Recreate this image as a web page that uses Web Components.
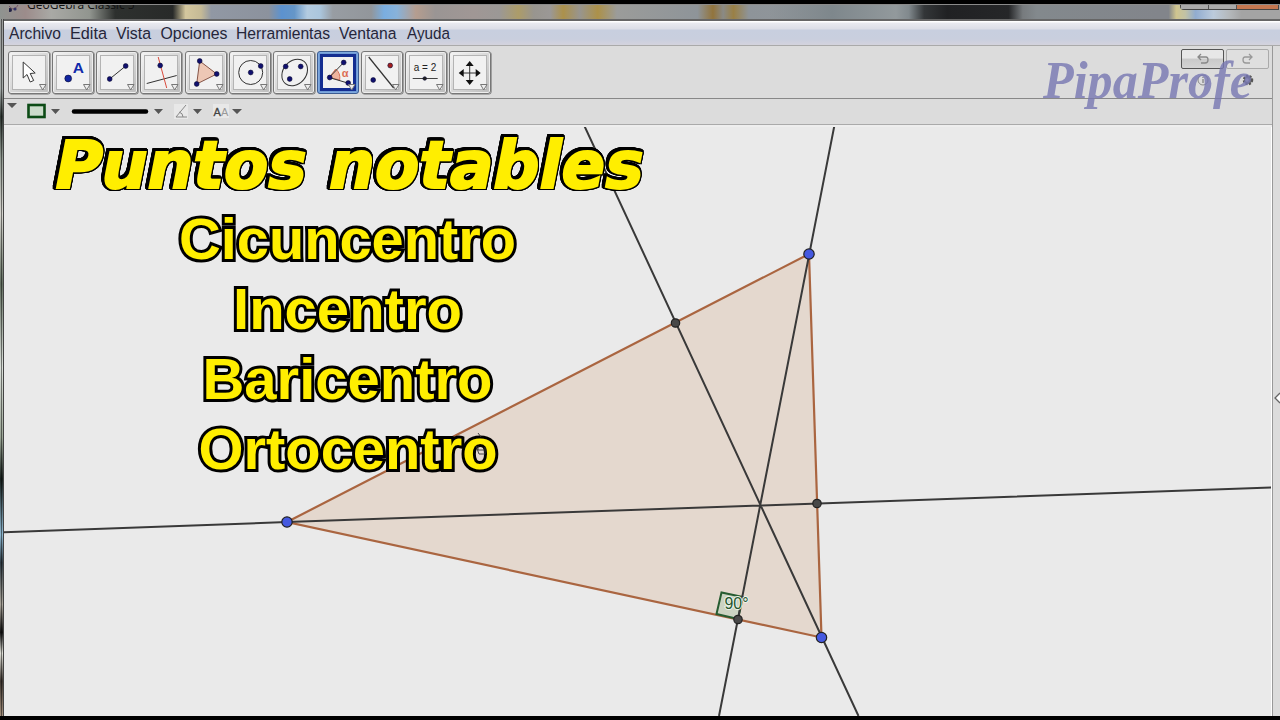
<!DOCTYPE html>
<html lang="es"><head><meta charset="utf-8"><title>GeoGebra Classic 5</title>
<style>html,body{margin:0;height:100%;overflow:hidden;background:#000}</style></head>
<body>
<geo-window></geo-window>
<script>
const define = (name, html, init) => {
  const t = document.createElement('template');
  t.innerHTML = html;
  customElements.define(name, class extends HTMLElement {
    constructor() {
      super();
      this.attachShadow({mode: 'open'}).append(t.content.cloneNode(true));
    }
    connectedCallback() { if (init) init(this, this.shadowRoot); }
  });
};

define('geo-titlebar', `<style>
:host{display:block;height:15px;overflow:hidden;border-top:1px solid #8a8a8a;box-sizing:border-box;
 background:linear-gradient(90deg,#8f9390 0,#9c8c8b 2%,#a9a9a5 4%,#91958f 7%,#2d302e 9%,#282a29 13.5%,#d4c79e 14.5%,#c5ba96 15.7%,#9198a4 16.5%,#8c929d 21%,#5c92cf 22%,#6596c8 23%,#b3cbe0 24%,#abc6dd 25%,#989da3 26%,#92969b 29%,#7aaee0 30%,#88b2da 31%,#b59d8f 32.5%,#9a9594 34%,#a09795 37%,#9b9896 39%,#ac9c69 40.5%,#98958f 41.7%,#9b9896 43%,#ac914b 44%,#98958f 45.3%,#ac9149 46.7%,#9b9c9a 48.2%,#8e9499 54.5%,#92743c 55.7%,#8a8a86 56.5%,#9a8045 57.3%,#8e9499 58.5%,#92979b 65%,#7b8388 80%,#7b8388 100%)}
.row{display:flex;justify-content:space-between;height:14px;
 background:linear-gradient(90deg,transparent 60%,#7e878c 65%,#92999c 70%,#81898d 71%,#333638 72.2%,#202123 74%,#252628 78.8%,#777b7e 79.9%,#83898d 81%,#82858b 90.5%,#82858b 91.3%,#d0c58f 91.9%,#c2c2a5 92.6%,#91acd0 93.4%,#bccbdc 94.8%,#b5b9bc 96%,#a4a4a4 97%)}
.name{display:flex;color:#111;font:12px/12px "Open Sans",sans-serif;padding-left:9px;gap:8px;margin-top:-6px;height:15px}
.name svg{margin-top:5px}
.btns{display:flex;height:4px;margin-right:1px;border:1px solid #444;border-top:0;border-radius:0 0 0 4px;width:97px}
.btns i{width:27px;background:#aaa;border-right:1px solid #555}.btns i:last-child{flex:1;background:#c47750;border:0}
</style><div class="row"><div class="name"><svg width="10" height="12"><path d="M0 2C3 6 6 6 9 1" fill="none" stroke="#765364"/><circle cx="1" cy="6" r="2" fill="#224"/><circle cx="6" cy="5" r="1.6" fill="#336"/></svg><span>GeoGebra Classic 5</span></div><div class="btns"><i></i><i></i><i></i></div></div>`);

define('geo-menubar', `<style>
:host{display:block;height:27px;box-sizing:border-box;border-top:2px solid #666;border-bottom:1px solid #aaa;box-shadow:inset 0 1px #fff;
background:linear-gradient(#fff 0,#fff 1px,#e9eaf0 2px,#dcdee7 8px,#c8cfdf 9px,#c9cfde 18px,#d2d2de 23px,#d4d4dc)}
nav{display:flex;padding:5px 0 0 5px;color:#25263a;font:16.3px/18px "Liberation Sans",sans-serif}
svg{display:block;overflow:visible}
</style><nav></nav>`, (h, r) => {
  const items = [['Archivo',9,52],['Edita',70,37],['Vista',116,35],['Opciones',160.5,67],['Herramientas',236,94],['Ventana',339,57.5],['Ayuda',407,43]];
  r.querySelector('nav').innerHTML = '<svg width="480" height="18">' + items.map(([t,x,w]) =>
    `<text x="${x-9}" y="13" textLength="${w}" lengthAdjust="spacingAndGlyphs" fill="#25263a">${t}</text>`).join('') + '</svg>';
});

define('geo-tool', `<style>
:host{display:block;box-sizing:border-box;width:42px;height:43px;border:1px solid #777;border-radius:3px;padding:3px;
background:linear-gradient(135deg,#f4f4f4,#d2d2d2 60%,#bcbcbc);box-shadow:inset 0 0 0 1px #eee,.6px .6px 0 #777}
.f{box-sizing:border-box;width:34px;height:35px;border:1px solid #b4b4b4;background:#f1f1f1}
:host([active]){background:#6f9ad5;border-color:#3c5c91;box-shadow:inset 0 0 0 1px #7ea9df}
:host([active]) .f{border:3px solid #142d91;width:36px;height:37px;margin:-1px}
svg{display:block;width:34px;height:35px;margin:-1px;overflow:visible}
:host([active]) svg{margin:-2px}
</style><div class="f"></div>`, (h, r) => {
  const d = (x,y,c='#10106f',q=2.4) => `<circle cx="${x}" cy="${y}" r="${q}" fill="${c}" stroke="#080830" stroke-width=".6"/>`;
  const s = 'fill="none" stroke="#333"';
  const icons = {
    move:`<path d="M10.5 7V23L14.3 19.500L17.5 27L21 25.500L17.5 18.500L22.5 18Z" fill="#fff" stroke="#333"/>`,
    point:`${d(11.5,23.5,'#1024a0',3.4)}<text x="16" y="18" font-family="Liberation Sans,sans-serif" font-weight="bold" font-size="15.5" fill="#102aab">A</text>`,
    segment:`<path d="M9 24L25 11" ${s}/>${d(9,24)}${d(25,11)}`,
    perp:`<path d="M2 28.500L32 20.500" ${s}/><path d="M13.500 2L22 33" stroke="#d94a3c" fill="none"/>${d(15.5,10.5)}`,
    poly:`<path d="M10 6L27 19L7 29Z" fill="#edc7b5" stroke="#865548"/>${d(10,6)}${d(27,19)}${d(7,29)}`,
    circle:`<circle cx="17" cy="17.500" r="12" ${s}/>${d(17,17.5)}${d(27,11)}`,
    conic:`<ellipse cx="17" cy="17.500" rx="14.500" ry="11.500" transform="rotate(-50 17 17.500)" ${s}/>${d(8,11.5)}${d(23,11.5)}${d(12,24)}`,
    angle:`<path d="M7.500 22.500L14 14Q19 18 18 25Z" fill="#efb39d" stroke="#d6745e"/><path d="M22 7.500L7.500 22.500L26 28" ${s}/>${d(22,7.5)}${d(8,22.5)}${d(26.5,28)}<text x="20" y="21.500" font-family="Liberation Sans,sans-serif" font-size="11" font-weight="bold" fill="#dc6c51">α</text>`,
    mirror:`<path d="M3 2L28 33" ${s} stroke-width="1.200"/>${d(24.5,10.5,'#a31e1e')}${d(7.5,25)}`,
    slider:`<text x="4" y="15.500" textLength="22.500" lengthAdjust="spacingAndGlyphs" font-family="Liberation Sans,sans-serif" font-size="11" fill="#222">a = 2</text><path d="M3 23.500H28" stroke="#444"/>${d(15,23.5,'#222',1.8)}`,
    pan:`<path d="M16 10V26M8 18H25" ${s}/><path d="M16 6L20 11H12ZM16 30L20 25H12ZM5 18L10 14V22ZM27 18L22 14V22Z" fill="#111"/>`
  };
  r.querySelector('.f').innerHTML = `<svg viewBox="0 0 34 35"><g transform="translate(.7 0)">${icons[h.getAttribute('icon')]}</g><path d="M27.500 29.500H34L30.700 35Z" fill="#eee" stroke="#777"/></svg>`;
});

define('geo-toolbar', `<style>
:host{display:flex;justify-content:space-between;height:53px;box-sizing:border-box;background:#dcdcdc;border-bottom:1px solid #888;padding:5px 3px 0 4px}
.tools{display:flex;gap:2.15px}
.side{display:grid;grid-template-columns:43px 43px;column-gap:2px;grid-template-rows:20px 24px;margin-top:-2px}
.u{box-sizing:border-box;border:1px solid #555;border-radius:2px;background:linear-gradient(#e7e7e7 45%,#c9c9c9 50%,#d4d4d4)}
.u.off{border-color:#aaa;background:#dfdfdf}
svg{display:block;margin:auto}
</style><div class="tools"></div><div class="side">
<div class="u"><svg width="18" height="18"><path d="M7 4L4 7L7 10M4 7H12Q14 7 14 10Q14 13 11 13H7" fill="none" stroke="#888" stroke-width="1.300"/></svg></div>
<div class="u off"><svg width="18" height="18"><path d="M10 4L13 7L10 10M13 7H6Q4 7 4 10Q4 13 7 13H11" fill="none" stroke="#999" stroke-width="1.300"/></svg></div>
<svg width="20" height="20"><circle cx="10" cy="9" r="5" fill="#ddd" stroke="#888"/><path d="M10 12V8M10 7V6" stroke="#666"/></svg>
<svg width="20" height="20"><circle cx="10" cy="9" r="4" fill="#777" stroke="#555" stroke-width="2.500" stroke-dasharray="2 1.300"/><circle cx="9" cy="9" r="1.800" fill="#c4c4d0"/></svg></div>`, (h, r) => {
  r.querySelector('.tools').innerHTML = ['move','point','segment','perp','poly','circle','conic','angle','mirror','slider','pan'].map(n => `<geo-tool icon="${n}"${n==='angle'?' active':''}></geo-tool>`).join('');
});

define('geo-stylebar', `<style>
:host{display:block;height:28px;box-sizing:border-box;background:#dcdcdc;border-bottom:2px solid #eee;box-shadow:inset 0 -1px #aaa}
svg{display:block}text{font-family:"Liberation Sans",sans-serif;font-size:11px}
</style><svg width="260" height="25"><g fill="#555"><path d="M3 4h10l-5 5zM47 10h9l-4.500 5zM150 10h9l-4.500 5zM189 10h9l-4.500 5zM228 10h10l-5 5z"/></g>
<rect x="24.500" y="6" width="16" height="12" fill="#cbdccb" stroke="#0c4b16" stroke-width="2.600"/><path d="M70 12.500H142" stroke="#000" stroke-width="4.500" stroke-linecap="round"/>
<path d="M170 5h14v15h-14z" fill="#e8e8e8"/><path d="M182 6L172 18H183M175 13Q179 14 179 18" fill="none" stroke="#888"/><path d="M209 5h16v14h-16z" fill="#e8e8e8"/>
<text x="209.500" y="16.500" fill="#444" stroke="#444" stroke-width=".3">A</text><text x="217" y="16.500" fill="#999">A</text></svg>`);

define('geo-canvas', `<style>
:host{display:block;flex:1;min-height:0;background:#eaeaea;border-right:1px solid #fff;overflow:hidden}
svg{display:block}
.v{fill:#ffee00;stroke:#ffee00;stroke-width:2px;font-weight:700;font-family:"DejaVu Sans",sans-serif;font-size:66px}
.outline{filter:drop-shadow(1.2px 0 #000) drop-shadow(-1.2px 0 #000) drop-shadow(0 1.2px #000) drop-shadow(0 -1.2px #000) drop-shadow(.7px .7px #000) drop-shadow(-.7px -.7px #000)}
.a{fill:#ffee00;stroke:#000;stroke-width:6px;paint-order:stroke;stroke-linejoin:miter;stroke-miterlimit:3;font-weight:700;font-family:"Liberation Sans",sans-serif;font-size:58px}
</style><svg width="1268" height="589" viewBox="4 127 1268 589">
<path d="M287 522L809 254L821.500 637.500Z" fill="#e4d8ce" stroke="#aa6540" stroke-width="2.200"/>
<path d="M716.500 614L721.500 592.500L743 597L738 619Z" fill="#cbd3c2" stroke="#265c31" stroke-width="2"/>
<g stroke="#393939" stroke-width="2"><path d="M4 532.300L287 522L760 505.500L1272 487.500M834.500 125L719 716M583.500 124L858.500 716" fill="none"/></g>
<g stroke="#222" stroke-width="1.200"><g fill="#484848"><circle cx="675.500" cy="323" r="4.200"/><circle cx="817" cy="503.500" r="4.200"/><circle cx="738" cy="619.500" r="4.200"/></g>
<g fill="#4559e0"><circle cx="287" cy="522" r="5.200"/><circle cx="809" cy="254" r="5.200"/><circle cx="821.500" cy="637.500" r="5.200"/></g></g>
<text x="724.500" y="609" textLength="24" lengthAdjust="spacingAndGlyphs" font-family="Liberation Sans,sans-serif" font-size="16.500" fill="#24562f" stroke="#edf3e9" stroke-width="2" paint-order="stroke">90°</text>
<g class="outline"><text class="v" transform="translate(51 188) skewX(-11)" x="0" y="0" textLength="589" lengthAdjust="spacingAndGlyphs">Puntos notables</text></g>
<g class="a"><text x="179" y="258.800" textLength="337" lengthAdjust="spacingAndGlyphs">Cicuncentro</text>
<text x="233" y="328.800" textLength="229" lengthAdjust="spacingAndGlyphs">Incentro</text>
<text x="202.500" y="398.800" textLength="290" lengthAdjust="spacingAndGlyphs">Baricentro</text>
<text x="198.500" y="468.800" textLength="299" lengthAdjust="spacingAndGlyphs">Ortocentro</text></g>
<path d="M478 433L481 437M476 446L479 454H485V447M478 446V450H484" fill="none" stroke="#333" stroke-width=".9"/>
</svg>`);

define('geo-rail', `<style>
:host{display:flex;align-items:center;width:8px;box-sizing:border-box;border-left:1px solid #999;background:#dcdcdc;overflow:hidden}
svg{display:block;margin-top:34px}
</style><svg width="7" height="12"><path d="M7 1L2 6L7 11" fill="#fff" stroke="#666" stroke-width="1.300"/></svg>`);

define('geo-watermark', `<style>
:host{position:absolute;left:1036px;top:44px;width:226px;height:66px;pointer-events:none}
svg{display:block;overflow:visible}
text{font:italic bold 52px "Liberation Serif",serif;fill:#7777b2;opacity:.8}
</style><svg width="226" height="66"><text x="7" y="49.500" textLength="209" lengthAdjust="spacingAndGlyphs">PipaProfe</text></svg>`);

define('geo-window', `<style>
:host{display:flex;flex-direction:column;position:relative;width:1280px;height:720px;box-sizing:border-box;border-top:4px solid #000;border-bottom:4px solid #000;overflow:hidden;background:#dcdcdc}
.body{display:flex;flex:1;min-height:0}
.edge{width:4px;box-sizing:border-box;border-right:1px solid #444;background:linear-gradient(90deg,#fff0 0 1px,#0007 1px 2px,#fff0 2px),linear-gradient(#9a9c9b,#a4aaa8 10%,#313935 14%,#939c94 20%,#d5d4ce 28%,#657263 38%,#dadfd9 50%,#9ba696 60%,#17201d 66%,#8eb8d1 74%,#303d46 78%,#aaa59b 84%,#111 88%,#dfdfd7 91%,#403832 95%,#a28e7b)}
.col{flex:1;display:flex;flex-direction:column;min-width:0}
.work{display:flex;flex:1;min-height:0}
.main{flex:1;display:flex;flex-direction:column;min-width:0}
</style><geo-titlebar></geo-titlebar><div class="body"><div class="edge"></div><div class="col"><geo-menubar></geo-menubar>
<div class="work"><div class="main"><geo-toolbar></geo-toolbar><geo-stylebar></geo-stylebar><geo-canvas></geo-canvas></div><geo-rail></geo-rail></div></div></div><geo-watermark></geo-watermark>`);
</script></body></html>
